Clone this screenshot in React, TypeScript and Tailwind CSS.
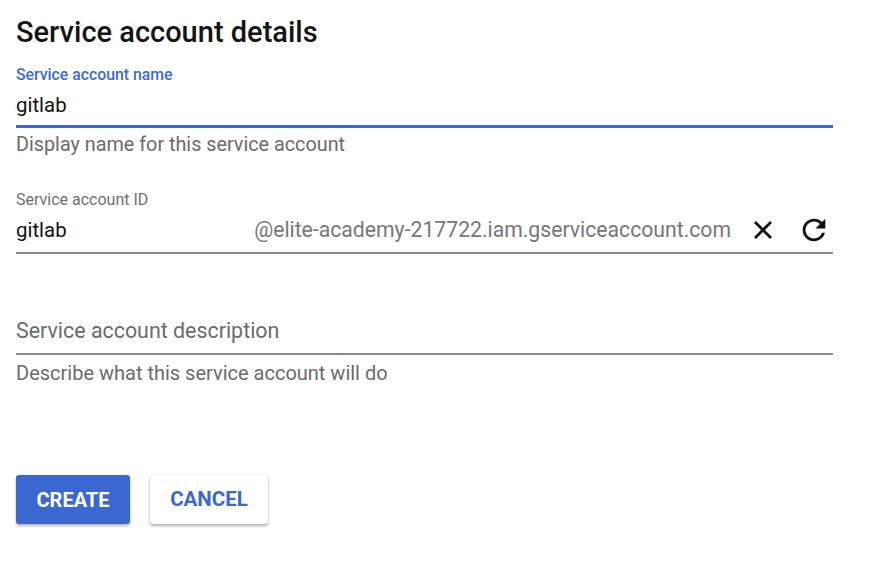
import React from "react";

export default function App() {
  return (
    <div className="w-[880px] h-[575px] bg-white pl-4 pt-[14px] overflow-hidden" style={{ fontFamily: "Roboto, 'Liberation Sans', sans-serif" }}>
      <h1 className="text-[29px] leading-[36px] font-medium text-[#141414]">Service account details</h1>

      <div className="w-[817px] mt-[16px]">
        <div className="text-[15.8px] leading-[18px] font-medium text-[#3b6bd6]">Service account name</div>
        <div className="text-[20.4px] leading-[26px] text-[#111] mt-[8px]">gitlab</div>
        <div className="h-[3px] bg-[#3b67d1] mt-[7px]"></div>
        <div className="text-[19.8px] leading-[26px] text-[#6b6b6b] mt-[4px]">Display name for this service account</div>
      </div>

      <div className="w-[817px] mt-[32px]">
        <div className="text-[16px] leading-[20px] text-[#707070]">Service account ID</div>
        <div className="flex items-center h-[30px] mt-[5px]">
          <span className="text-[20.4px] leading-[26px] text-[#111]">gitlab</span>
          <span className="ml-auto text-[21.2px] leading-[26px] text-[#777]">@elite-academy-217722.iam.gserviceaccount.com</span>
          <svg className="ml-[20px]" width="24" height="24" viewBox="0 0 24 24" fill="none" stroke="#111" strokeWidth="2.8" strokeLinecap="butt">
            <path d="M4 4 L20 20 M20 4 L4 20" />
          </svg>
          <svg className="ml-[22px] mr-[2px]" width="34" height="34" viewBox="0 0 24 24" fill="#111">
            <path d="M17.65 6.35A7.958 7.958 0 0 0 12 4c-4.42 0-7.990 3.58-7.99 8s3.57 8 7.99 8c3.73 0 6.84-2.55 7.730-6h-2.08A5.99 5.99 0 0 1 12 18c-3.31 0-6-2.690-6-6s2.69-6 6-6c1.66 0 3.14.69 4.22 1.78L13 11h7V4l-2.35 2.35z" />
          </svg>
        </div>
        <div className="h-[2px] bg-[#8a8a8a] mt-[7px]"></div>
      </div>

      <div className="w-[817px] mt-[63px]">
        <div className="text-[21.4px] leading-[28px] text-[#6b6b6b]">Service account description</div>
        <div className="h-[2px] bg-[#8a8a8a] mt-[8px]"></div>
        <div className="text-[20px] leading-[26px] text-[#6b6b6b] mt-[5px]">Describe what this service account will do</div>
      </div>

      <div className="flex gap-[20px] mt-[89px]">
        <button className="w-[114px] h-[49px] rounded-[3px] bg-[#3b67d1] text-white text-[20px] font-bold shadow-[0_2px_3px_rgba(0,0,0,0.3)]">CREATE</button>
        <button className="w-[118px] h-[49px] rounded-[3px] bg-white text-[#3b67d1] text-[20.5px] font-bold shadow-[0_2px_3px_rgba(0,0,0,0.3),0_0_2px_rgba(0,0,0,0.12)]">CANCEL</button>
      </div>
    </div>
  );
}
